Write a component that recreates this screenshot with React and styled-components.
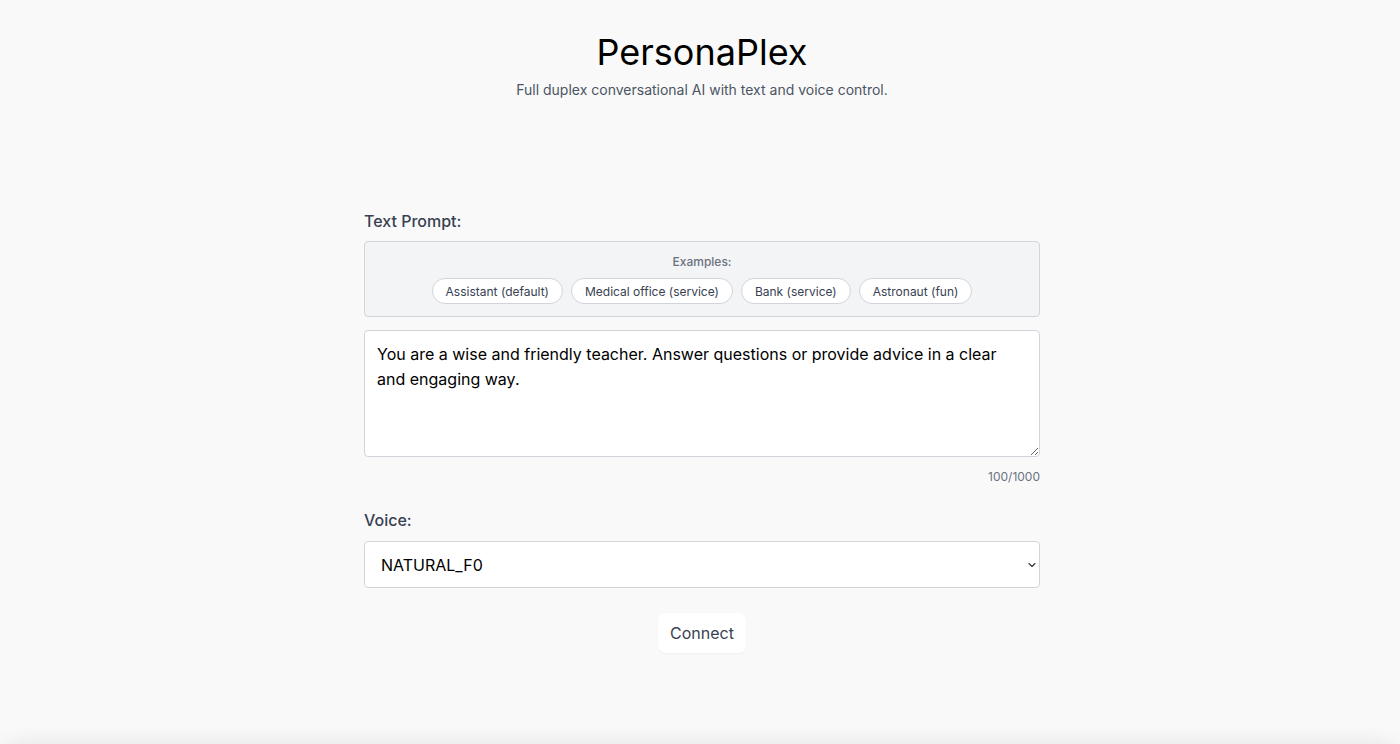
import React, { useState } from 'react';
import styled, { createGlobalStyle } from 'styled-components';

const GlobalStyle = createGlobalStyle`
	html, body {
		margin: 0;
		padding: 0;
		background: #f9f9f9;
		font-family: Inter, "Noto Sans", sans-serif;
		overflow: hidden;
	}
	* { box-sizing: border-box; }
`;

const Page = styled.div`
	height: 744px;
	display: flex;
	flex-direction: column;
	align-items: center;
	padding-top: 32px;
	padding-left: 4px;
	position: relative;
	overflow: hidden;
`;

const Shade = styled.div`
	position: absolute;
	left: 4px;
	right: 4px;
	bottom: -40px;
	height: 40px;
	border-radius: 16px;
	box-shadow: 0 0 22px rgba(0, 0, 0, 0.09);
`;

const Title = styled.h1`
	margin: 0;
	font-size: 36px;
	line-height: 40px;
	font-weight: 400;
	color: #000;
`;

const Subtitle = styled.p`
	margin: 8px 0 0;
	font-size: 14px;
	line-height: 20px;
	color: #4b5563;
`;

const Form = styled.div`
	width: 676px;
	margin-top: 109px;
	display: flex;
	flex-direction: column;
`;

const Label = styled.label`
	font-size: 16px;
	line-height: 24px;
	font-weight: 500;
	color: #374151;
	margin-top: ${({ top }) => top || 0}px;
`;

const Examples = styled.div`
	margin-top: 8px;
	background: #f3f4f6;
	border: 1px solid #d1d5db;
	border-radius: 4px;
	padding: 12px;
	display: flex;
	flex-direction: column;
	align-items: center;
	gap: 8px;
`;

const ExamplesTitle = styled.div`
	font-size: 12px;
	line-height: 16px;
	font-weight: 500;
	color: #6b7280;
`;

const Pills = styled.div`
	display: flex;
	gap: 8px;
	justify-content: center;
`;

const Pill = styled.button`
	height: 26px;
	padding: 0 13px;
	border-radius: 999px;
	border: 1px solid #d1d5db;
	background: #fff;
	font-family: inherit;
	font-size: 12px;
	color: #374151;
	cursor: pointer;
`;

const Prompt = styled.textarea`
	margin-top: 13px;
	height: 127px;
	border: 1px solid #d1d5db;
	border-radius: 4px;
	background: #fff;
	padding: 11px 12px;
	font-family: inherit;
	font-size: 16px;
	line-height: 25px;
	color: #000;
	resize: vertical;
	outline: none;
`;

const Counter = styled.div`
	margin-top: 12px;
	align-self: flex-end;
	font-size: 12px;
	line-height: 16px;
	color: #6b7280;
`;

const SelectWrap = styled.div`
	position: relative;
	margin-top: 9px;
	display: flex;
`;

const Select = styled.select`
	flex: 1;
	height: 47px;
	appearance: none;
	-webkit-appearance: none;
	border: 1px solid #d1d5db;
	border-radius: 4px;
	background: #fff;
	padding: 0 32px 0 16px;
	font-family: inherit;
	font-size: 16px;
	color: #000;
	outline: none;
`;

const Chevron = styled.svg`
	position: absolute;
	right: 3px;
	top: 19px;
	width: 10px;
	height: 10px;
	pointer-events: none;
`;

const Connect = styled.button`
	align-self: center;
	margin-top: 25px;
	height: 40px;
	padding: 0 12px;
	border: none;
	border-radius: 8px;
	background: #fff;
	box-shadow: 0 1px 2px rgba(0, 0, 0, 0.04);
	font-family: inherit;
	font-size: 16px;
	color: #374151;
	cursor: pointer;
`;

const examples = [
	'Assistant (default)',
	'Medical office (service)',
	'Bank (service)',
	'Astronaut (fun)',
];

export default function App() {
	const [text, setText] = useState('You are a wise and friendly teacher. Answer questions or provide advice in a clear and engaging way.');

	return (
		<Page>
			<GlobalStyle />
			<Title>PersonaPlex</Title>
			<Subtitle>Full duplex conversational AI with text and voice control.</Subtitle>
			<Form>
				<Label>Text Prompt:</Label>
				<Examples>
					<ExamplesTitle>Examples:</ExamplesTitle>
					<Pills>
						{examples.map(e => <Pill key={e}>{e}</Pill>)}
					</Pills>
				</Examples>
				<Prompt value={text} onChange={ev => setText(ev.target.value)} maxLength={1000} />
				<Counter>{text.length}/1000</Counter>
				<Label top={23}>Voice:</Label>
				<SelectWrap>
					<Select defaultValue="NATURAL_F0">
						<option>NATURAL_F0</option>
						<option>NATURAL_F1</option>
						<option>NATURAL_M0</option>
					</Select>
					<Chevron viewBox="0 0 10 10">
						<path d="M2 3.5 L5 6.5 L8 3.5" fill="none" stroke="#333" strokeWidth="1.1" strokeLinecap="round" strokeLinejoin="round" />
					</Chevron>
				</SelectWrap>
				<Connect>Connect</Connect>
			</Form>
			<Shade />
		</Page>
	);
}
